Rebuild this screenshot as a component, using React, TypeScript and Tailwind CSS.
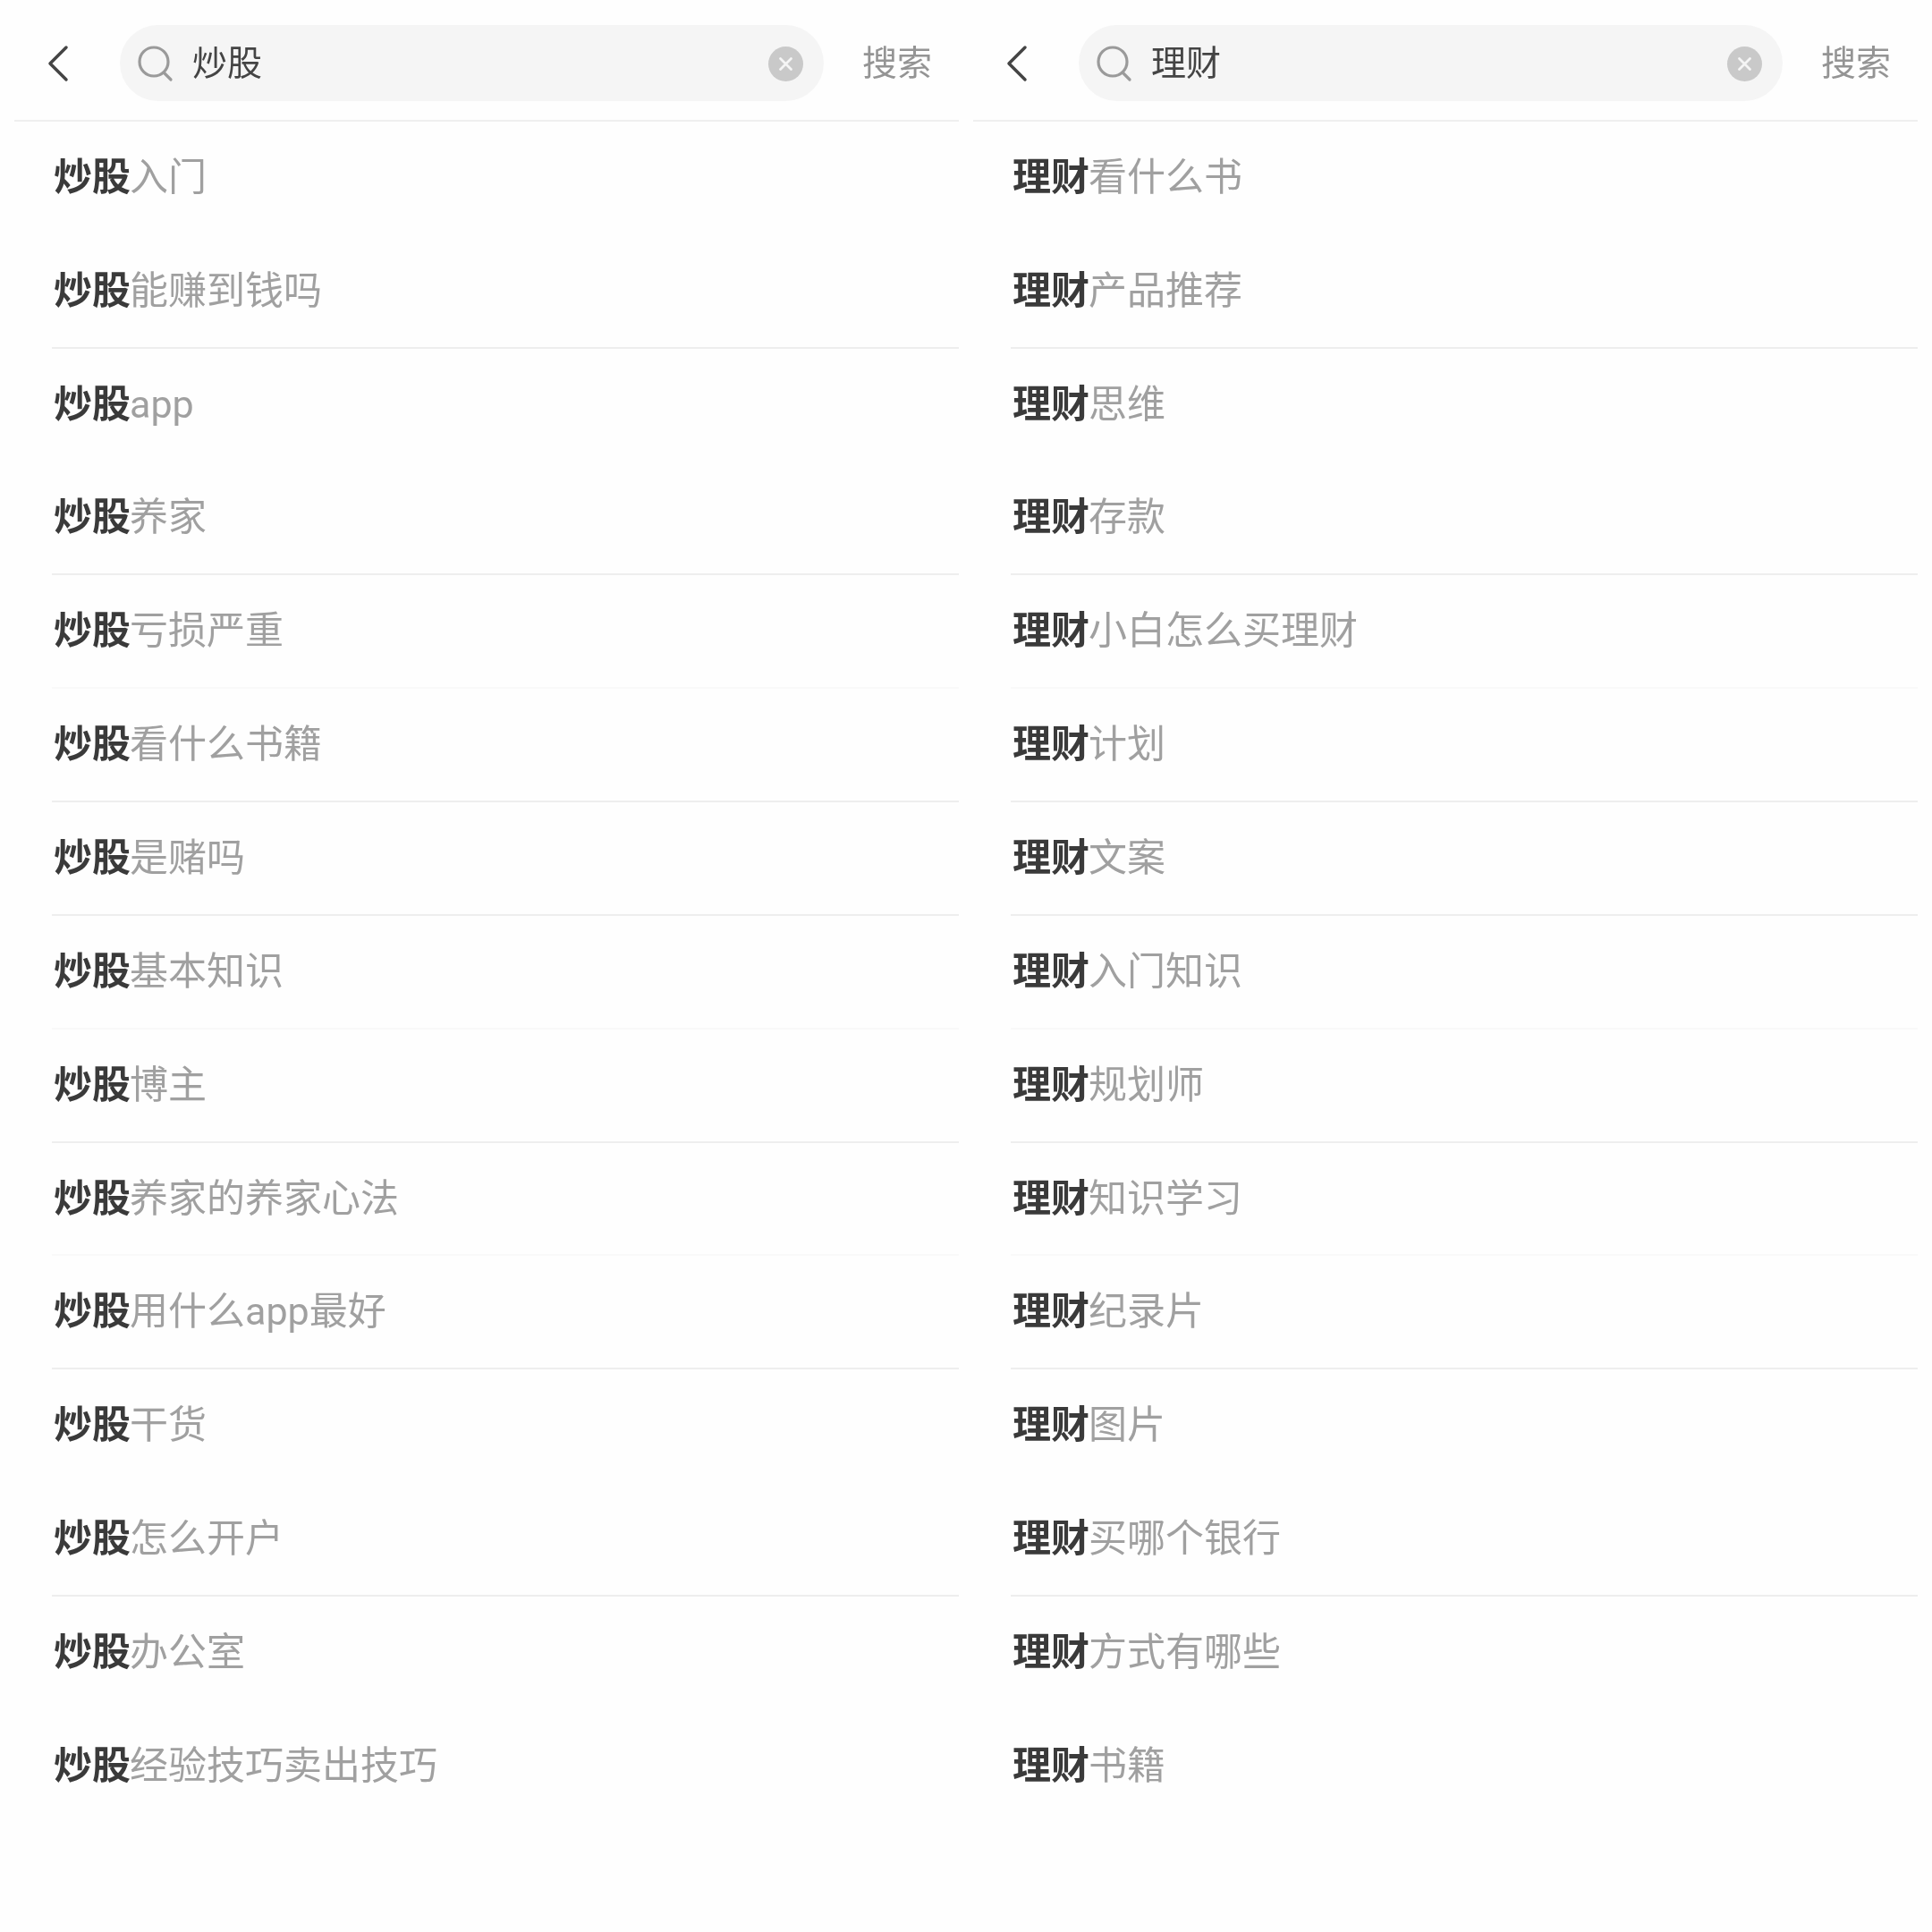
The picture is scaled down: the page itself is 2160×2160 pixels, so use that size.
const FONT = "font-['Roboto','Noto_Sans_CJK_SC',sans-serif]";

type Line = "none" | "strong" | "faint";
const lines: Line[] = ["none", "strong", "none", "strong", "faint", "strong", "strong", "faint", "strong", "faint", "strong", "none", "strong", "none", "none"];

const left = ["入门", "能赚到钱吗", "app", "养家", "亏损严重", "看什么书籍", "是赌吗", "基本知识", "博主", "养家的养家心法", "用什么app最好", "干货", "怎么开户", "办公室", "经验技巧卖出技巧"];
const right = ["看什么书", "产品推荐", "思维", "存款", "小白怎么买理财", "计划", "文案", "入门知识", "规划师", "知识学习", "纪录片", "图片", "买哪个银行", "方式有哪些", "书籍"];

function Row({ keyword, rest, line }: { keyword: string; rest: string; line: Line }) {
  const border =
    line === "strong" ? "border-b-2 border-[#eeeeee]" : line === "faint" ? "border-b-2 border-[#f9f9f9]" : "border-b-2 border-transparent";
  return (
    <div className={`ml-[42px] h-[126.85px] flex items-center text-[43px] leading-none ${border}`}>
      <span className="font-bold text-[#3a3a3a] ml-[2px]">{keyword}</span>
      <span className="text-[#a0a0a0] -ml-px">{rest}</span>
    </div>
  );
}

function Column({ keyword, items }: { keyword: string; items: string[] }) {
  return (
    <div className="w-[1056px] flex flex-col">
      <div className="h-[136px] pt-[7px] flex items-center border-b-2 border-[#efefef]">
        <svg className="ml-[36px] shrink-0" width="26" height="42" viewBox="0 0 26 42" fill="none">
          <path d="M22 3 L4 21 L22 39" stroke="#444444" strokeWidth="3.5" strokeLinecap="round" strokeLinejoin="round" />
        </svg>
        <div className="ml-[56px] w-[787px] h-[85px] rounded-full bg-[#f5f5f5] flex items-center">
          <svg className="ml-[20px] shrink-0" width="40" height="42" viewBox="0 0 40 42" fill="none">
            <circle cx="18" cy="19" r="16" stroke="#9a9a9a" strokeWidth="3.2" />
            <path d="M29 31 L37 39" stroke="#9a9a9a" strokeWidth="3.2" strokeLinecap="round" />
          </svg>
          <span className="ml-[21px] mt-[2px] text-[39px] leading-none text-[#444444]">{keyword}</span>
          <div className="ml-auto mr-[23px] mt-[2px] w-[39px] h-[39px] rounded-full bg-[#c9c9c9] flex items-center justify-center">
            <svg width="17" height="17" viewBox="0 0 17 17" fill="none">
              <path d="M2.5 2.5 L14.5 14.5 M14.5 2.5 L2.5 14.5" stroke="#f5f5f5" strokeWidth="2.8" strokeLinecap="round" />
            </svg>
          </div>
        </div>
        <span className="ml-[43px] mt-[2px] text-[39px] leading-none text-[#949494]">搜索</span>
      </div>
      {items.map((rest, i) => (
        <Row key={rest + i} keyword={keyword} rest={rest} line={lines[i]} />
      ))}
    </div>
  );
}

export default function App() {
  return (
    <div className={`w-[2160px] h-[2160px] bg-[#fefefe] flex gap-4 px-4 blur-[0.5px] ${FONT}`}>
      <Column keyword="炒股" items={left} />
      <Column keyword="理财" items={right} />
    </div>
  );
}
